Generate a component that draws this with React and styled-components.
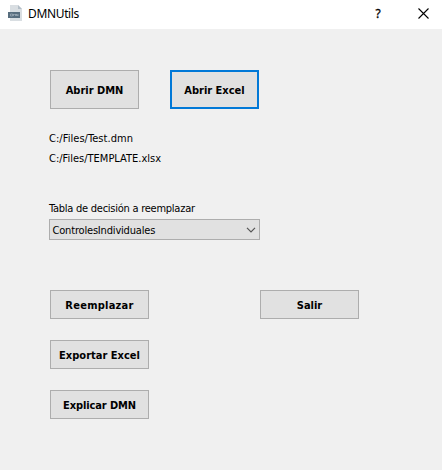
import React from "react";
import styled, { createGlobalStyle } from "styled-components";

const GlobalStyle = createGlobalStyle`
  * { box-sizing: border-box; }
  body { margin: 0; background: #f0f0f0; }
`;

const Window = styled.div`
  width: 442px;
  height: 470px;
  display: flex;
  flex-direction: column;
  background: #f0f0f0;
  color: #000;
  font: 11px/14px "DejaVu Sans Condensed", "DejaVu Sans", sans-serif;
  font-stretch: condensed;
  overflow: hidden;
`;

const TitleBar = styled.header`
  height: 29px;
  flex: none;
  display: flex;
  align-items: center;
  padding: 0 9px 2px 7px;
  background: #fff;
`;

const Title = styled.span`
  flex: 1;
  margin-left: 5px;
  font: 12px/17px "Noto Sans", sans-serif;
  letter-spacing: -0.35px;
`;

const TitleButton = styled.button`
  display: flex;
  align-items: center;
  justify-content: center;
  width: 20px;
  height: 21px;
  margin-left: ${(p) => p.$gap || 0}px;
  padding: 0;
  border: 0;
  background: none;
  color: #000;
  font: 12px/17px "Noto Sans", sans-serif;
  -webkit-text-stroke: 0.3px #000;
`;

const Content = styled.main`
  display: flex;
  flex-direction: column;
  padding: 41px 83px 0 49px;
`;

const FileButtons = styled.div`
  display: flex;
  gap: 31px;
  padding-left: 1px;
`;

const Button = styled.button`
  display: flex;
  align-items: center;
  justify-content: center;
  width: ${(p) => (p.$tall ? 89 : 99)}px;
  height: ${(p) => (p.$tall ? 39 : 29)}px;
  padding: 2px 0 0;
  border: ${(p) => (p.$focused ? "2px solid #0078d7" : "1px solid #adadad")};
  background: #e1e1e1;
  color: #000;
  font: inherit;
  font-weight: bold;
  letter-spacing: ${(p) => p.$spacing || 0}px;
  white-space: nowrap;
`;

const Label = styled.div`
  height: 20px;
  line-height: 20px;
  white-space: nowrap;
  letter-spacing: ${(p) => p.$spacing || 0}px;
`;

const Files = styled.div`
  margin: 20px 0 30px;
`;

const Select = styled.div`
  display: flex;
  align-items: center;
  justify-content: space-between;
  width: 211px;
  height: 21px;
  padding: 1px 3px 0 2.5px;
  border: 1px solid #adadad;
  background: #e1e1e1;
`;

const SelectValue = styled.span`
  padding-top: 2px;
  letter-spacing: -0.18px;
`;

const Actions = styled.div`
  display: flex;
  justify-content: space-between;
  align-items: flex-start;
  padding-left: 1px;
  margin-top: 50px;
`;

const ActionColumn = styled.div`
  display: flex;
  flex-direction: column;
  gap: 21px;
`;

const FileIcon = () => (
  <svg width="16" height="17" viewBox="0 0 16 17">
    <path d="M3 0h8l4 4v12H3z" fill="#d9dee2" />
    <path d="M11 0v4h4z" fill="#b3bec7" />
    <path d="M1 7h12v6H1z" fill="#576d7e" />
    <path d="M3.5 9h2v2h-2zM6.5 11V9l1 1 1-1v2M9.5 11V9l1.5 2V9" fill="none" stroke="#a2b0bb" strokeWidth=".7" />
  </svg>
);

const CloseIcon = () => (
  <svg width="11" height="11" viewBox="0 0 11 11">
    <path d="M.5.5l10 10M10.5.5l-10 10" stroke="#000" strokeWidth="1.1" />
  </svg>
);

const Chevron = () => (
  <svg width="10" height="6" viewBox="0 0 10 6">
    <path d="M1 .8l4 4 4-4" fill="none" stroke="#555" strokeWidth="1.2" />
  </svg>
);

export default function App() {
  return (
    <Window>
      <GlobalStyle />
      <TitleBar>
        <FileIcon />
        <Title>DMNUtils</Title>
        <TitleButton aria-label="Ayuda">?</TitleButton>
        <TitleButton aria-label="Cerrar" $gap={25}><CloseIcon /></TitleButton>
      </TitleBar>
      <Content>
        <FileButtons>
          <Button $tall>Abrir DMN</Button>
          <Button $tall $focused>Abrir Excel</Button>
        </FileButtons>
        <Files>
          <Label $spacing={0.05}>C:/Files/Test.dmn</Label>
          <Label>C:/Files/TEMPLATE.xlsx</Label>
        </Files>
        <Label $spacing={-0.25}>Tabla de decisión a reemplazar</Label>
        <Select role="combobox" aria-label="Tabla de decisión">
          <SelectValue>ControlesIndividuales</SelectValue>
          <Chevron />
        </Select>
        <Actions>
          <ActionColumn>
            <Button $spacing={0.25}>Reemplazar</Button>
            <Button>Exportar Excel</Button>
            <Button $spacing={-0.1}>Explicar DMN</Button>
          </ActionColumn>
          <Button>Salir</Button>
        </Actions>
      </Content>
    </Window>
  );
}
